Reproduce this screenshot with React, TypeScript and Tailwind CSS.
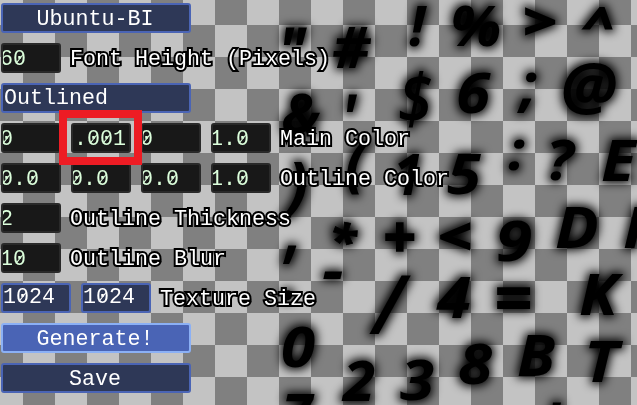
import React from "react";

type Box = [char: string, left: number, top: number, right: number, bottom: number];

// Ink boxes of every glyph in the font atlas preview.
const glyphs: Box[] = [
  ['"', 283, 26, 307, 44], ["#", 333, 26, 372, 68], ["!", 409, 5, 427, 47],
  ["%", 453, 5, 500, 47], [">", 525, 6, 556, 35], ["^", 582, 5, 613, 29],
  ["&", 283, 93, 320, 135], ["'", 346, 93, 358, 111], ["$", 399, 72, 432, 128],
  ["6", 458, 72, 491, 114], [";", 517, 72, 537, 113], ["@", 563, 61, 616, 114],
  [")", 281, 161, 307, 217], ["(", 347, 140, 371, 195], ["1", 398, 153, 420, 195],
  ["5", 447, 153, 482, 195], [":", 508, 139, 525, 171], ["?", 550, 139, 576, 181],
  ["E", 602, 139, 638, 181], [",", 283, 245, 297, 264], ["*", 333, 221, 358, 245],
  ["+", 385, 221, 415, 251], ["<", 440, 221, 471, 250], ["9", 498, 220, 531, 262],
  ["D", 556, 206, 597, 248], ["F", 624, 206, 661, 248], ["-", 323, 271, 343, 279],
  [".", 282, 290, 293, 301], ["/", 369, 276, 411, 334], ["4", 436, 276, 471, 318],
  ["=", 497, 287, 531, 309], ["K", 580, 273, 624, 315], ["0", 282, 326, 315, 368],
  ["7", 283, 393, 315, 435], ["2", 341, 359, 375, 401], ["3", 400, 359, 434, 401],
  ["8", 459, 343, 492, 385], ["B", 518, 334, 555, 376], ["T", 588, 340, 624, 382],
  ["'", 550, 401, 562, 419],
];

const faces = '60px "Open Sans", "Noto Sans", sans-serif';
const lighter = "$/";
const heavier: Record<string, number> = { ">": 2, "<": 2, "^": 1.6, "+": 1.6, "*": 1 };

function Atlas() {
  const ctx = document.createElement("canvas").getContext("2d")!;
  return (
    <svg className="absolute inset-0" width="637" height="405" viewBox="0 0 637 405">
      <defs>
        <filter id="outline" filterUnits="userSpaceOnUse" x="240" y="-30" width="440" height="480" colorInterpolationFilters="sRGB">
          <feMorphology in="SourceAlpha" operator="dilate" radius="2" result="fat" />
          <feGaussianBlur in="fat" stdDeviation="4.8" result="soft" />
          <feMerge>
            <feMergeNode in="soft" />
            <feMergeNode in="SourceGraphic" />
          </feMerge>
        </filter>
      </defs>
      <g filter="url(#outline)">
        {glyphs.map(([char, left, top, right, bottom], i) => {
          const font = `italic ${lighter.includes(char) ? 600 : 700} ${faces}`;
          const stroke = heavier[char] ?? 0;
          ctx.font = font;
          const m = ctx.measureText(char);
          const sx = (right - left - stroke) / (m.actualBoundingBoxLeft + m.actualBoundingBoxRight);
          const sy = (bottom - top - stroke) / (m.actualBoundingBoxAscent + m.actualBoundingBoxDescent);
          const tx = left + stroke / 2 + m.actualBoundingBoxLeft * sx;
          const ty = top + stroke / 2 + m.actualBoundingBoxAscent * sy;
          return (
            <text
              key={i}
              style={{ font }}
              stroke="black"
              strokeWidth={stroke}
              transform={`translate(${tx} ${ty}) scale(${sx} ${sy})`}
            >
              {char}
            </text>
          );
        })}
      </g>
    </svg>
  );
}

// Monospace text whose zeros carry a diagonal slash.
function Mono({ text }: { text: string }) {
  return (
    <>
      {text.split("").map((c, i) =>
        c === "0" ? (
          <span key={i} className="relative inline-block">
            0
            <svg className="absolute top-[3px] left-0" width="13" height="16" viewBox="0 0 13 16">
              <path d="M3 12.5 L10 3.5" stroke="currentColor" strokeWidth="1.2" />
            </svg>
          </span>
        ) : (
          <React.Fragment key={i}>{c}</React.Fragment>
        ),
      )}
    </>
  );
}

function Button({ text, className = "w-[190px] justify-center pt-[3px] pr-[2px]" }: { text: string; className?: string }) {
  return (
    <button className={`flex h-[30px] items-center rounded-[3px] border-2 border-[#4a64b5] bg-[#2e3857] text-white ${className}`}>
      <span><Mono text={text} /></span>
    </button>
  );
}

function Field({ text, inner = "-ml-[3px]" }: { text: string; inner?: string }) {
  return (
    <div className="flex h-[30px] w-[60px] items-center overflow-hidden rounded-[3px] border-2 border-[#292929] bg-[#181818] pt-[3px] text-[#dcffdc]">
      <span className={inner}><Mono text={text} /></span>
    </div>
  );
}

function Label({ text }: { text: string }) {
  return (
    <span className="-ml-px pt-[3px] text-white [-webkit-text-stroke:4px_black] [paint-order:stroke_fill] [stroke-linejoin:round]">
      {text}
    </span>
  );
}

function Row({ children }: { children: React.ReactNode }) {
  return <div className="flex h-[30px] items-center gap-[10px]">{children}</div>;
}

export default function App() {
  return (
    <main className="relative h-[405px] w-[637px] overflow-hidden bg-[repeating-conic-gradient(#808080_0_25%,#c3c3c3_0_50%)] bg-[length:64px_64px] bg-[position:-9px_-7px] font-['Liberation_Mono',monospace] text-[21.67px] leading-[24px] whitespace-pre">
      <Atlas />
      <div className="relative flex flex-col gap-[10px] pt-[3px] pl-px">
        <Row><Button text="Ubuntu-BI" /></Row>
        <Row><Field text="60" /><Label text="Font Height (Pixels)" /></Row>
        <Row><Button text="Outlined" className="w-[190px] justify-start pt-px pl-px" /></Row>
        <Row>
          <Field text="0" />
          <Field text="0.001" inner="-ml-[12px]" />
          <Field text="0" />
          <Field text="1.0" />
          <Label text="Main Color" />
        </Row>
        <Row>
          <Field text="0.0" />
          <Field text="0.0" />
          <Field text="0.0" />
          <Field text="1.0" />
          <Label text="Outline Color" />
        </Row>
        <Row><Field text="2" /><Label text="Outline Thickness" /></Row>
        <Row><Field text="10" /><Label text="Outline Blur" /></Row>
        <Row>
          <Button text="1024" className="w-[70px] justify-start" />
          <Button text="1024" className="w-[70px] justify-start" />
          <Label text="Texture Size" />
        </Row>
        <Row>
          <button className="flex h-[30px] w-[190px] items-center justify-center rounded-[3px] border-2 border-[#8bb0f5] bg-[#4a64b5] pt-[3px] pr-[2px] text-white">
            Generate!
          </button>
        </Row>
        <Row><Button text="Save" /></Row>
      </div>
      <div className="absolute top-[110px] left-[59px] h-[55px] w-[83px] border-8 border-[#ed1c24]" />
    </main>
  );
}
